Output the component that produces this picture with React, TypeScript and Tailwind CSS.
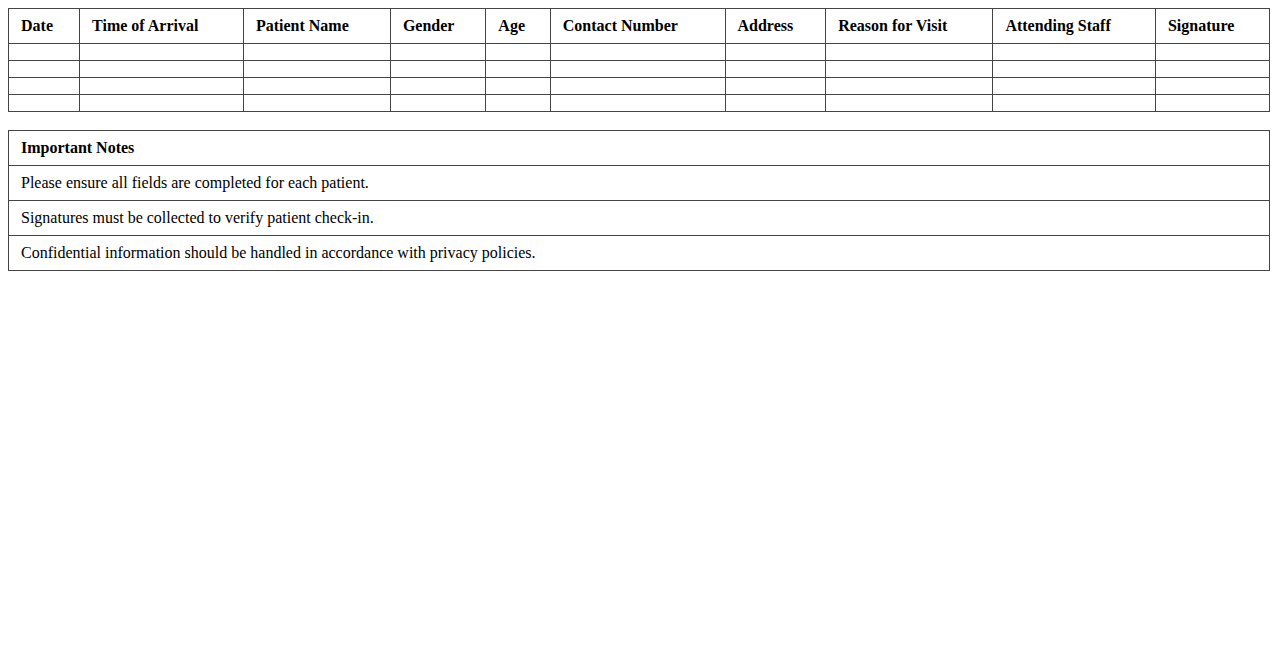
import React from "react";

const headers = [
  "Date",
  "Time of Arrival",
  "Patient Name",
  "Gender",
  "Age",
  "Contact Number",
  "Address",
  "Reason for Visit",
  "Attending Staff",
  "Signature",
];

const notes = [
  "Please ensure all fields are completed for each patient.",
  "Signatures must be collected to verify patient check-in.",
  "Confidential information should be handled in accordance with privacy policies.",
];

export default function App() {
  return (
    <div
      className="p-2 bg-white text-black text-[16px] leading-[18px]"
      style={{ fontFamily: '"Liberation Serif", "Times New Roman", serif' }}
    >
      <table className="w-full border-collapse">
        <thead>
          <tr>
            {headers.map((h) => (
              <th
                key={h}
                className="border border-[#444] px-3 py-2 text-left font-bold"
              >
                {h}
              </th>
            ))}
          </tr>
        </thead>
        <tbody>
          {[0, 1, 2, 3].map((r) => (
            <tr key={r}>
              {headers.map((h) => (
                <td key={h} className="border border-[#444] px-3 py-2"></td>
              ))}
            </tr>
          ))}
        </tbody>
      </table>

      <table className="w-full border-collapse mt-[18px]">
        <thead>
          <tr>
            <th className="border border-[#444] px-3 py-2 text-left font-bold">
              Important Notes
            </th>
          </tr>
        </thead>
        <tbody>
          {notes.map((n) => (
            <tr key={n}>
              <td className="border border-[#444] px-3 py-2">{n}</td>
            </tr>
          ))}
        </tbody>
      </table>
    </div>
  );
}
